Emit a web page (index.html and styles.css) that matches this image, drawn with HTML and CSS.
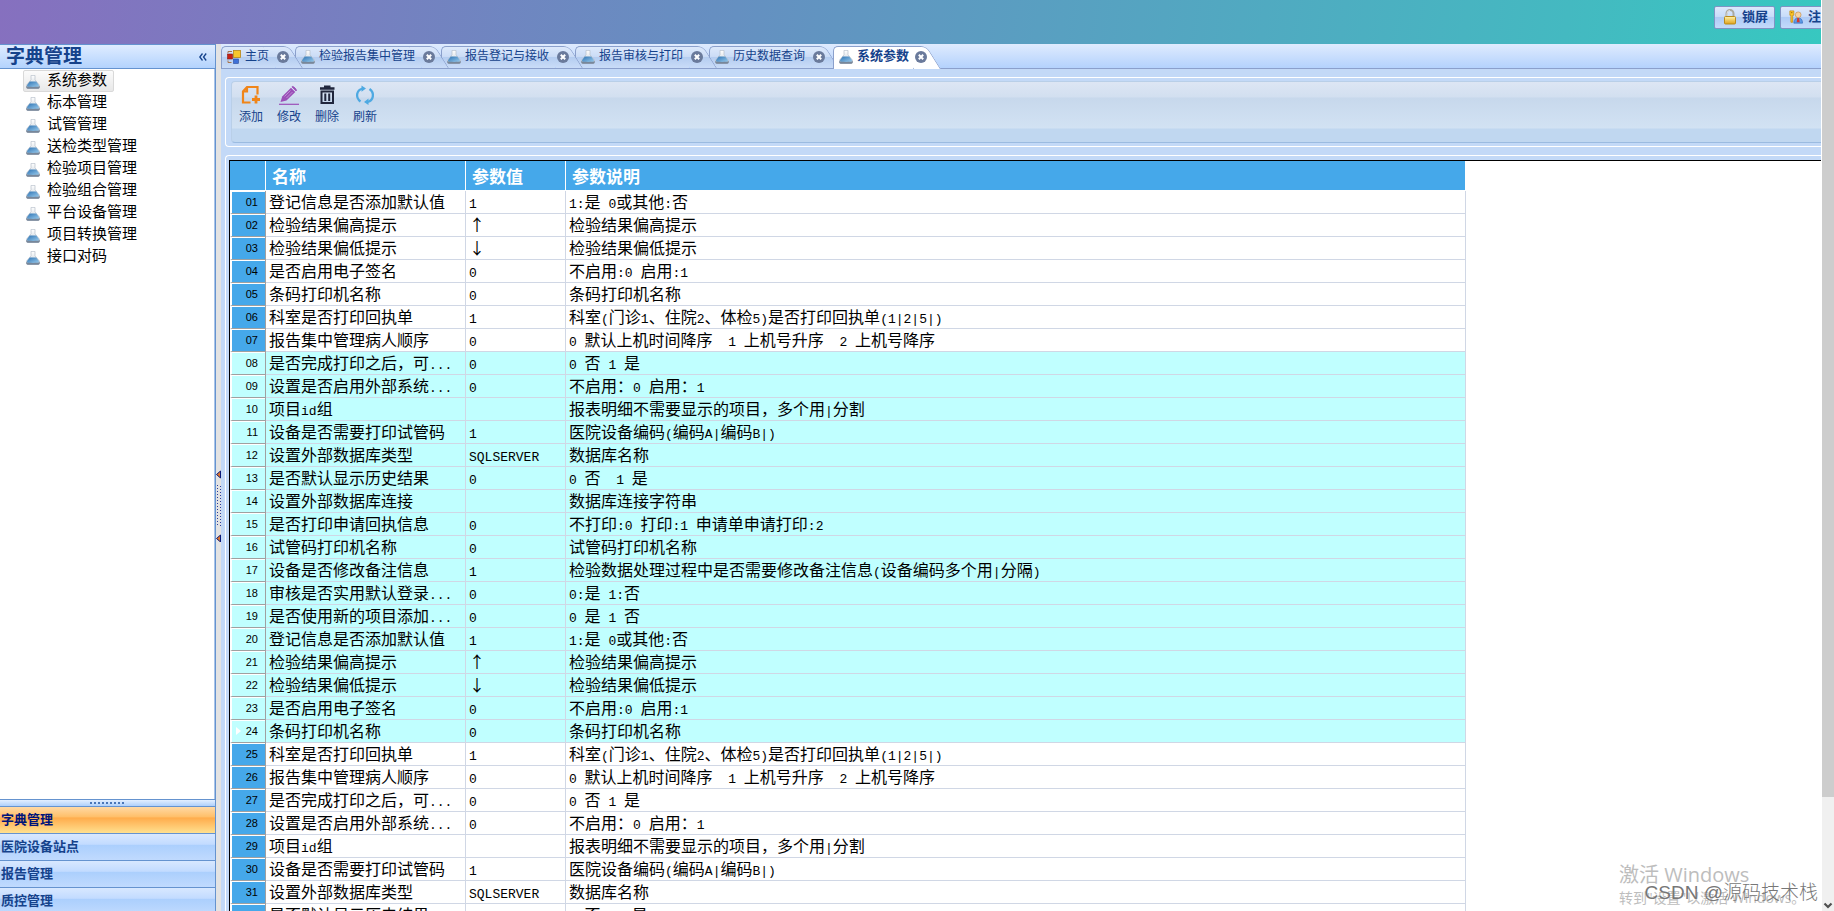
FILE: index.html
```html
<!DOCTYPE html>
<html lang="zh-CN">
<head>
<meta charset="utf-8">
<title>系统参数</title>
<link rel="stylesheet" href="styles.css">
</head>
<body>
<svg class="defs" aria-hidden="true">
  <defs>
    <linearGradient id="glass" x1="0" y1="0" x2="0" y2="1"><stop offset="0" stop-color="#ffffff"/><stop offset="1" stop-color="#c3ccd6"/></linearGradient>
    <linearGradient id="liquid" x1="0" y1="0" x2="1" y2="1"><stop offset="0" stop-color="#2f74b4"/><stop offset="1" stop-color="#9acbec"/></linearGradient>
    <linearGradient id="gold" x1="0" y1="0" x2="0" y2="1"><stop offset="0" stop-color="#fff3a8"/><stop offset="1" stop-color="#dfa11c"/></linearGradient>
    <symbol id="flask" viewBox="0 0 14 14">
      <path d="M5 .4h4v4.400l4.500 5.400c.7 1.600.2 3.300-1.300 3.300H1.800C.3 13.500-.2 11.800.5 10.200L5 4.800z" fill="url(#glass)" stroke="#b4bdc8" stroke-width=".7"/>
      <path d="M3.800 6.600h6.400l2.700 3.400c.4 1-.2 2-1.400 2h-9c-1.200 0-1.800-1-1.400-2z" fill="url(#liquid)"/>
      <path d="M.2 11c1.200 1.200 12.400 1.200 13.600 0 .1 1.700-.5 2.700-1.600 2.700H1.800C.7 13.700.1 12.700.2 11z" fill="#78879a"/>
    </symbol>
    <symbol id="close" viewBox="0 0 12 12">
      <circle cx="6" cy="6" r="6" fill="#6a7a9b"/>
      <path d="M3.800 3.800l4.400 4.400M8.200 3.800L3.800 8.200" stroke="#fff" stroke-width="2"/>
    </symbol>
  </defs>
</svg>
<div class="window">
  <div class="app">
    <header class="banner">
      <button class="top-btn" type="button">
        <svg width="14" height="16" viewBox="0 0 14 16"><path d="M3.500 8V4.500a3.500 3.500 0 0 1 7 0V8" fill="none" stroke="#a9a9a0" stroke-width="2"/><path d="M4 7V4.500a3 3 0 0 1 3-3" fill="none" stroke="#eee" stroke-width=".8"/><rect x="1.500" y="7.500" width="11" height="7.500" rx="1" fill="url(#gold)" stroke="#b98a1d"/></svg>
        锁屏</button>
      <button class="top-btn" type="button">
        <svg width="14" height="16" viewBox="0 0 16 16"><path d="M5.500 15c0-4 2-6 5-6s5 2 5 6z" fill="#5b9be8" stroke="#2f62b5" stroke-width=".7"/><path d="M9.500 9h2l.7 5h-3.400z" fill="#d9342b"/><circle cx="10.500" cy="5.500" r="3.300" fill="#f6d2a0" stroke="#c0894a" stroke-width=".7"/><path d="M1 1h4.500v5H4.200v8H2.200V6H1z" fill="#ffc928" stroke="#bf8410" stroke-width=".8"/><circle cx="3.200" cy="3" r=".8" fill="#9a6708"/></svg>
        注销</button>
    </header>
    <div class="body">
      <aside class="sidebar">
        <div class="side-head"><h1>字典管理</h1><button class="collapse" type="button" aria-label="收起"><svg width="8" height="8" viewBox="0 0 8 8"><path d="M3.500.5L.8 4l2.700 3.500M7.200.5L4.500 4l2.700 3.500" fill="none" stroke="#15428b" stroke-width="1.300"/></svg></button></div>
        <nav class="tree">
          <a class="on" href="#"><svg><use href="#flask"/></svg>系统参数</a>
          <a href="#"><svg><use href="#flask"/></svg>标本管理</a>
          <a href="#"><svg><use href="#flask"/></svg>试管管理</a>
          <a href="#"><svg><use href="#flask"/></svg>送检类型管理</a>
          <a href="#"><svg><use href="#flask"/></svg>检验项目管理</a>
          <a href="#"><svg><use href="#flask"/></svg>检验组合管理</a>
          <a href="#"><svg><use href="#flask"/></svg>平台设备管理</a>
          <a href="#"><svg><use href="#flask"/></svg>项目转换管理</a>
          <a href="#"><svg><use href="#flask"/></svg>接口对码</a>
        </nav>
        <div class="grip"><i></i></div>
        <div class="groups">
          <button class="on" type="button">字典管理</button>
          <button type="button">医院设备站点</button>
          <button type="button">报告管理</button>
          <button type="button">质控管理</button>
        </div>
      </aside>
      <div class="splitter">
        <svg width="5" height="72" viewBox="0 0 5 72"><path d="M4.500 1v7L.5 4.500z" fill="#e0752d" stroke="#0a1a7a"/><path d="M1.500 15v42M4.500 16v42" stroke="#2a3a9a" stroke-dasharray="1 2"/><path d="M4.500 65v7L.5 68.500z" fill="#e0752d" stroke="#0a1a7a"/></svg>
      </div>
      <main class="work">
        <div class="tabs">
          <div class="tab"><button type="button"><svg viewBox="0 0 14 14"><rect x=".5" y="4" width="5" height="5" fill="#c62014" stroke="#8a1a10" stroke-width=".6"/><rect x="6.500" y=".5" width="7" height="7" fill="#f7c62b" stroke="#b7861a" stroke-width=".8"/><rect x="6.500" y="9" width="5" height="4.500" fill="#3e70d8" stroke="#294a9a" stroke-width=".6"/><path d="M1 10.500v2h3.500M1 3V1.500h4" fill="none" stroke="#a8744a"/></svg>主页</button><button class="x" type="button" aria-label="关闭"><svg><use href="#close"/></svg></button></div>
          <div class="tab"><button type="button"><svg><use href="#flask"/></svg>检验报告集中管理</button><button class="x" type="button" aria-label="关闭"><svg><use href="#close"/></svg></button></div>
          <div class="tab"><button type="button"><svg><use href="#flask"/></svg>报告登记与接收</button><button class="x" type="button" aria-label="关闭"><svg><use href="#close"/></svg></button></div>
          <div class="tab"><button type="button"><svg><use href="#flask"/></svg>报告审核与打印</button><button class="x" type="button" aria-label="关闭"><svg><use href="#close"/></svg></button></div>
          <div class="tab"><button type="button"><svg><use href="#flask"/></svg>历史数据查询</button><button class="x" type="button" aria-label="关闭"><svg><use href="#close"/></svg></button></div>
          <div class="tab on"><button type="button"><svg><use href="#flask"/></svg>系统参数</button><button class="x" type="button" aria-label="关闭"><svg><use href="#close"/></svg></button></div>
        </div>
        <div class="bar-frame">
          <div class="toolbar">
            <button type="button"><svg viewBox="0 0 20 20"><path d="M9.500 17.500H2V6.500L6 2h10.500v7.500M2 6.500h4V2" fill="none" stroke="#f08519" stroke-width="2.200"/><path d="M15 10.500v8M11 14.500h8" stroke="#f08519" stroke-width="2.800"/></svg>添加</button>
            <button type="button"><svg viewBox="0 0 20 20"><path d="M1.500 17l1.700-5.500L12 2.800l4.300 4.200-8.800 8.500z" fill="#9b4fb8"/><path d="M13 1.800c1-1.300 5.200 2.700 4.200 4.200z" fill="#9b4fb8" stroke="#9b4fb8"/><path d="M5.500 11.500l6-6M7.500 13l6-6" stroke="#c69ad8" stroke-width=".8"/><path d="M0 19.300h20" stroke="#9b4fb8" stroke-width="1.200"/></svg>修改</button>
            <button type="button"><svg viewBox="0 0 20 20"><path d="M3 3.500h14.500M7 1.800h6.500" stroke="#20263c" stroke-width="2.600"/><path d="M4.500 6.500h11.500v11.500H4.500zM8.300 8.500v7.500M12.200 8.500v7.500" fill="none" stroke="#20263c" stroke-width="2"/></svg>删除</button>
            <button type="button"><svg viewBox="0 0 20 20"><path d="M7.500 3.500C1.500 5 0 12.500 5.500 16.500M12.500 17c6-1.500 7.500-9 2-13" fill="none" stroke="#4ea9e2" stroke-width="2.300"/><path d="M6.500.5l4.500 3-4.500 3.300zM13.500 13.500v6.500L9 17z" fill="#4ea9e2"/></svg>刷新</button>
          </div>
        </div>
        <div class="grid-frame">
          <div class="grid">
            <table>
              <colgroup><col class="c-no"><col class="c-name"><col class="c-val"><col class="c-desc"></colgroup>
              <thead><tr><th></th><th>名称</th><th>参数值</th><th>参数说明</th></tr></thead>
              <tbody>
                <tr><th>01</th><td>登记信息是否添加默认值</td><td><span>1</span></td><td><span>1:</span>是<span> 0</span>或其他<span>:</span>否</td></tr>
                <tr><th>02</th><td>检验结果偏高提示</td><td>↑</td><td>检验结果偏高提示</td></tr>
                <tr><th>03</th><td>检验结果偏低提示</td><td>↓</td><td>检验结果偏低提示</td></tr>
                <tr><th>04</th><td>是否启用电子签名</td><td><span>0</span></td><td>不启用<span>:0 </span>启用<span>:1</span></td></tr>
                <tr><th>05</th><td>条码打印机名称</td><td><span>0</span></td><td>条码打印机名称</td></tr>
                <tr><th>06</th><td>科室是否打印回执单</td><td><span>1</span></td><td>科室<span>(</span>门诊<span>1</span>、住院<span>2</span>、体检<span>5)</span>是否打印回执单<span>(1|2|5|)</span></td></tr>
                <tr><th>07</th><td>报告集中管理病人顺序</td><td><span>0</span></td><td><span>0 </span>默认上机时间降序<span>  1 </span>上机号升序<span>  2 </span>上机号降序</td></tr>
                <tr class="sel"><th>08</th><td>是否完成打印之后，可<span>...</span></td><td><span>0</span></td><td><span>0 </span>否<span> 1 </span>是</td></tr>
                <tr class="sel"><th>09</th><td>设置是否启用外部系统<span>...</span></td><td><span>0</span></td><td>不启用：<span>0 </span>启用：<span>1</span></td></tr>
                <tr class="sel"><th>10</th><td>项目<span>id</span>组</td><td></td><td>报表明细不需要显示的项目，多个用<span>|</span>分割</td></tr>
                <tr class="sel"><th>11</th><td>设备是否需要打印试管码</td><td><span>1</span></td><td>医院设备编码<span>(</span>编码<span>A|</span>编码<span>B|)</span></td></tr>
                <tr class="sel"><th>12</th><td>设置外部数据库类型</td><td><span>SQLSERVER</span></td><td>数据库名称</td></tr>
                <tr class="sel"><th>13</th><td>是否默认显示历史结果</td><td><span>0</span></td><td><span>0 </span>否<span>  1 </span>是</td></tr>
                <tr class="sel"><th>14</th><td>设置外部数据库连接</td><td></td><td>数据库连接字符串</td></tr>
                <tr class="sel"><th>15</th><td>是否打印申请回执信息</td><td><span>0</span></td><td>不打印<span>:0 </span>打印<span>:1 </span>申请单申请打印<span>:2</span></td></tr>
                <tr class="sel"><th>16</th><td>试管码打印机名称</td><td><span>0</span></td><td>试管码打印机名称</td></tr>
                <tr class="sel"><th>17</th><td>设备是否修改备注信息</td><td><span>1</span></td><td>检验数据处理过程中是否需要修改备注信息<span>(</span>设备编码多个用<span>|</span>分隔<span>)</span></td></tr>
                <tr class="sel"><th>18</th><td>审核是否实用默认登录<span>...</span></td><td><span>0</span></td><td><span>0:</span>是<span> 1:</span>否</td></tr>
                <tr class="sel"><th>19</th><td>是否使用新的项目添加<span>...</span></td><td><span>0</span></td><td><span>0 </span>是<span> 1 </span>否</td></tr>
                <tr class="sel"><th>20</th><td>登记信息是否添加默认值</td><td><span>1</span></td><td><span>1:</span>是<span> 0</span>或其他<span>:</span>否</td></tr>
                <tr class="sel"><th>21</th><td>检验结果偏高提示</td><td>↑</td><td>检验结果偏高提示</td></tr>
                <tr class="sel"><th>22</th><td>检验结果偏低提示</td><td>↓</td><td>检验结果偏低提示</td></tr>
                <tr class="sel"><th>23</th><td>是否启用电子签名</td><td><span>0</span></td><td>不启用<span>:0 </span>启用<span>:1</span></td></tr>
                <tr class="sel cur"><th>24</th><td>条码打印机名称</td><td><span>0</span></td><td>条码打印机名称</td></tr>
                <tr><th>25</th><td>科室是否打印回执单</td><td><span>1</span></td><td>科室<span>(</span>门诊<span>1</span>、住院<span>2</span>、体检<span>5)</span>是否打印回执单<span>(1|2|5|)</span></td></tr>
                <tr><th>26</th><td>报告集中管理病人顺序</td><td><span>0</span></td><td><span>0 </span>默认上机时间降序<span>  1 </span>上机号升序<span>  2 </span>上机号降序</td></tr>
                <tr><th>27</th><td>是否完成打印之后，可<span>...</span></td><td><span>0</span></td><td><span>0 </span>否<span> 1 </span>是</td></tr>
                <tr><th>28</th><td>设置是否启用外部系统<span>...</span></td><td><span>0</span></td><td>不启用：<span>0 </span>启用：<span>1</span></td></tr>
                <tr><th>29</th><td>项目<span>id</span>组</td><td></td><td>报表明细不需要显示的项目，多个用<span>|</span>分割</td></tr>
                <tr><th>30</th><td>设备是否需要打印试管码</td><td><span>1</span></td><td>医院设备编码<span>(</span>编码<span>A|</span>编码<span>B|)</span></td></tr>
                <tr><th>31</th><td>设置外部数据库类型</td><td><span>SQLSERVER</span></td><td>数据库名称</td></tr>
                <tr><th>32</th><td>是否默认显示历史结果</td><td><span>0</span></td><td><span>0 </span>否<span>  1 </span>是</td></tr>
              </tbody>
            </table>
          </div>
        </div>
      </main>
    </div>
  </div>
  <div class="scroll"><div class="thumb"></div><svg width="10" height="8" viewBox="0 0 10 8"><path d="M1.500 1.500L5 5l3.500-3.500" fill="none" stroke="#505050" stroke-width="2.200"/></svg></div>
  <div class="activate"><p class="big">激活 Windows</p><p class="small">转到"设置"以激活 Windows。</p></div>
  <p class="credit">CSDN @源码技术栈</p>
</div>
</body>
</html>
```
FILE: styles.css
```css
* { box-sizing: border-box; }
html, body { height: 100%; margin: 0; }
body { font: 12px/16px "Liberation Sans", "Noto Sans CJK SC", sans-serif; color: #15428b; overflow: hidden; }
button { font: inherit; color: inherit; background: none; border: 0; padding: 0; margin: 0; white-space: nowrap; }
p, h1 { margin: 0; }
svg { display: block; flex: none; }
.defs { position: absolute; width: 0; height: 0; }

.window { position: relative; display: flex; height: 100vh; overflow: hidden; }
.app { flex: 1; min-width: 0; display: flex; flex-direction: column; overflow: hidden; border-right: 1px solid #fff; }

/* top banner */
.banner {
  flex: none; height: 44px; display: flex; justify-content: flex-end; gap: 5px; padding-top: 6px;
  margin-right: -20px; background: linear-gradient(98deg, #8670bf, #6590c1 40%, #44b9c1 85%, #36c9c0);
}
.top-btn {
  height: 23px; display: flex; align-items: center; gap: 5px; padding: 0 6px 2px 8px; font-weight: bold; font-size: 13px;
  border: 1px solid #7f93c4; border-radius: 2px;
  background: linear-gradient(#dce9fc, #c8dcf9 45%, #aecbf5 50%, #c3dafb);
}

.body { flex: 1; min-height: 0; display: flex; }

/* sidebar */
.sidebar { flex: none; width: 216px; display: flex; flex-direction: column; background: #fff; border-right: 1px solid #6593cf; }
.side-head {
  height: 25px; display: flex; align-items: center; justify-content: space-between; padding: 0 8px 0 6px;
  border-top: 1px solid #6593cf; border-bottom: 1px solid #6593cf; background: linear-gradient(#dfecff, #b3d3fd);
}
.side-head h1 { font-size: 19px; line-height: 22px; font-weight: bold; }
.collapse { padding-top: 1px; }
.tree { flex: 1; display: flex; flex-direction: column; align-items: flex-start; padding: 1px 0 0 23px; border-right: 1px solid #a9c4e8; }
.tree a {
  display: flex; align-items: center; gap: 7px; height: 22px; padding: 0 6px 2px 2px; font-size: 15px; line-height: 18px;
  color: #000; text-decoration: none; border: 1px solid transparent; border-radius: 2px;
}
.tree a.on { border-color: #d9d9d9; background: linear-gradient(#fbfbfb, #e8e8e8); }
.tree svg { width: 14px; height: 14px; margin-top: 4px; }
.grip {
  height: 7px; display: flex; justify-content: center; align-items: center;
  border-top: 1px solid #6593cf; background: linear-gradient(#e3efff, #afd0fb);
}
.grip i { width: 36px; height: 2px; background: repeating-linear-gradient(90deg, #4a76b8 0 2px, transparent 2px 4px); }
.groups { display: flex; flex-direction: column; height: 105px; overflow: hidden; }
.groups button {
  flex: none; height: 27px; text-align: left; padding-left: 1px; font-size: 13px; line-height: 24px; font-weight: bold;
  border-top: 1px solid #6593cf; background: linear-gradient(#d8e8ff, #c2dbff 40%, #abcffd 42%, #c0dafe);
}
.groups button.on { color: #00147a; background: linear-gradient(#ffd9a5, #ffbf69 38%, #ffac4c 42%, #ffe08f); }

.splitter { flex: none; width: 5px; display: flex; align-items: center; padding-top: 56px; background: #e3e3e3; }

/* tab strip */
.work { flex: 1; min-width: 0; display: flex; flex-direction: column; background: #c3d9f7; }
.tabs {
  flex: none; height: 25px; display: flex; align-items: flex-end;
  border-bottom: 1px solid #8ba0cc; background: linear-gradient(#dfebfe, #b4d2fd);
}
.tab {
  position: relative; isolation: isolate; height: 22px; display: flex; align-items: center; gap: 8px; padding: 0 6px 2px;
}
.tab:nth-child(1) { z-index: 6; }
.tab:nth-child(2) { z-index: 5; }
.tab:nth-child(3) { z-index: 4; }
.tab:nth-child(4) { z-index: 3; }
.tab:nth-child(5) { z-index: 2; }
.tab::before, .tab::after {
  content: ""; position: absolute; z-index: -1; top: 0; bottom: 0; border-top: 1px solid #8ba0cc;
  background: linear-gradient(#dde9fb, #cbdcf6 45%, #b5cdf0 50%, #c9dcf8);
}
.tab::before { left: 0; right: 20px; border-left: 1px solid #8ba0cc; border-radius: 5px 0 0 0; }
.tab::after { right: -8px; width: 26px; border-right: 1px solid #8ba0cc; border-radius: 0 6px 0 0; transform: skewX(32deg); transform-origin: bottom; }
.tab.on { z-index: 7; height: 23px; margin-bottom: -1px; margin-left: 2px; gap: 6px; padding-bottom: 3px; font-weight: bold; font-size: 13px; }
.tab.on::before, .tab.on::after { background: #fff; }
.tab button { display: flex; align-items: center; gap: 4px; }
.tab svg { width: 14px; height: 14px; margin-top: 2px; }
.tab .x svg { width: 12px; height: 12px; }

/* toolbar */
.bar-frame { flex: none; margin: 8px 0 0 4px; padding: 3px 0 3px 5px; border: 1px solid #fff; border-right: 0; border-radius: 4px 0 0 4px; }
.toolbar {
  height: 62px; display: flex; align-items: flex-start; padding: 3px 0 0; border: 1px solid #b9cfe8; border-right: 0; border-bottom-color: #9bbbe0;
  border-radius: 4px 0 0 4px; background: linear-gradient(#dde6f4, #d2dff0 15px, #c7d8ec 16px, #d2e2f3 46px, #c0d7f0 47px, #c0d7f0);
}
.toolbar button { width: 38px; display: flex; flex-direction: column; align-items: center; gap: 4px; }
.toolbar svg { width: 20px; height: 20px; }

/* data grid */
.grid-frame { flex: 1; min-height: 0; margin: 8px 0 0 4px; padding: 4px 0 0 3px; border: 1px solid #fff; border-right: 0; border-bottom: 0; border-radius: 4px 0 0 0; }
.grid { height: 100%; overflow: hidden; background: #fff; border: 1px solid #000; border-right: 0; border-bottom: 0; }
table { table-layout: fixed; width: 1236px; border-collapse: separate; border-spacing: 0; color: #000; }
.c-no { width: 36px; }
.c-name { width: 200px; }
.c-val { width: 100px; }
.c-desc { width: 900px; }
thead th {
  height: 30px; padding: 0 0 0 6px; text-align: left; color: #fff; font-size: 17px; line-height: 24px; font-weight: bold;
  background: #45a8ea; border-right: 1px solid #fff; border-bottom: 1px solid #fff;
}
td, tbody th { height: 23px; white-space: pre; vertical-align: top; }
td { padding: 0 0 0 3px; font-size: 16px; line-height: 20px; border-right: 1px solid #d0d7e5; border-bottom: 1px solid #d0d7e5; }
td, thead th { font-family: "Noto Sans CJK SC", sans-serif; }
td span { font: 13px/13px "Liberation Mono", monospace; }
tbody th {
  position: relative; padding: 0 7px 0 0; text-align: right; font: 11px/22px "Liberation Sans", sans-serif; background: #45a8ea;
  border-left: 2px solid #fff; border-right: 1px solid #a0a0a0; border-bottom: 1px solid #a0a0a0; box-shadow: inset 0 1px #fff;
}
.sel th, .sel td { background: #c0ffff; }
.cur th::before { content: ""; position: absolute; left: 4px; top: 7px; border: 4px solid transparent; border-left: 5px solid #fff; border-right: 0; }

/* window scrollbar */
.scroll { flex: none; width: 12px; display: flex; flex-direction: column; align-items: center; justify-content: space-between; background: #f0f0f0; }
.thumb { width: 100%; height: 87.5%; background: #cdcdcd; }
.scroll svg { margin-bottom: 1px; }

/* overlaid marks */
.activate { position: absolute; z-index: 10; right: 16px; bottom: 3px; width: 199px; color: #bdbdbd; font-family: "Open Sans", "Noto Sans CJK SC", sans-serif; white-space: nowrap; }
.activate .big { font-size: 20px; line-height: 26px; }
.activate .small { font-size: 14px; line-height: 20px; }
.credit { position: absolute; z-index: 11; right: 16px; bottom: 6px; font: 300 19px/24px "Liberation Sans", "Noto Sans CJK SC", sans-serif; color: #777; white-space: nowrap; }
```
